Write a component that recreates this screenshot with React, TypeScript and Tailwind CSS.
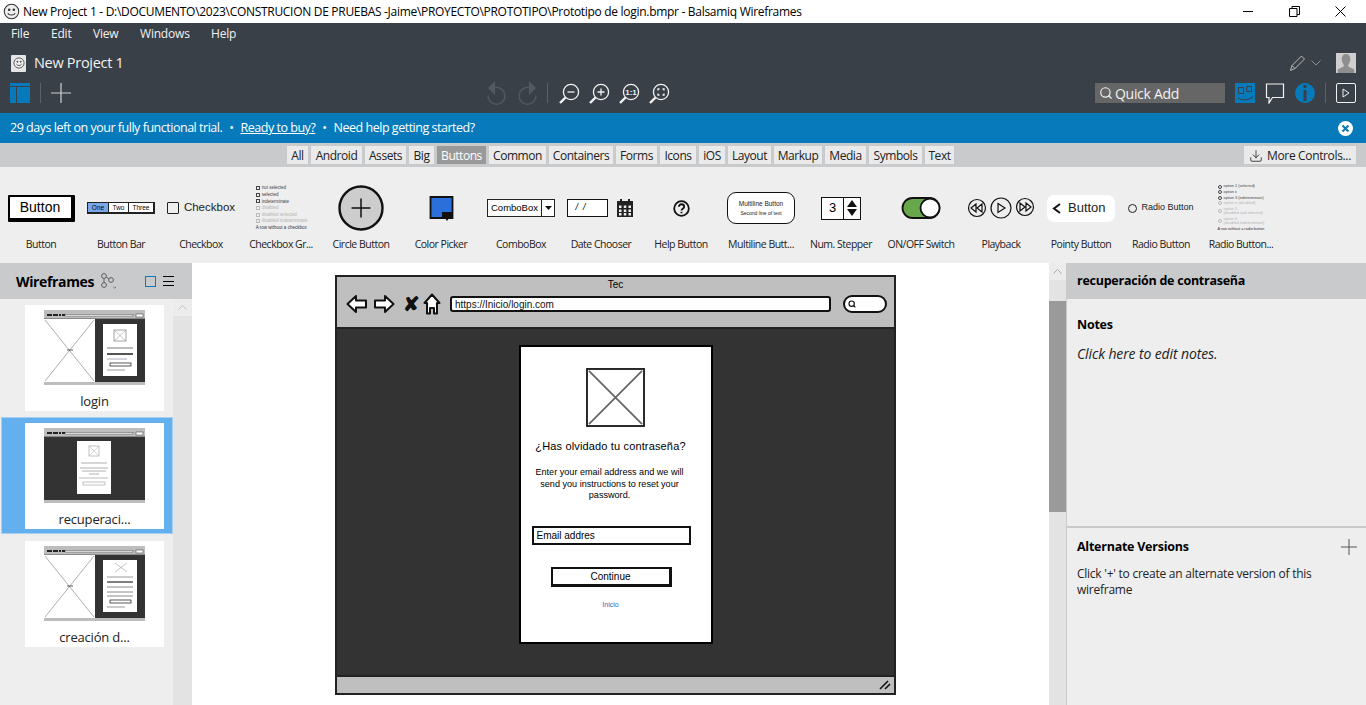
import React from 'react';
import { Search, Download } from 'lucide-react';

const SEGOE = "font-['Open_Sans',sans-serif]";
const SKETCH = "font-['Liberation_Sans',sans-serif]";

const TABS = ['All', 'Android', 'Assets', 'Big', 'Buttons', 'Common', 'Containers', 'Forms', 'Icons', 'iOS', 'Layout', 'Markup', 'Media', 'Symbols', 'Text'];
const TAB_W = [21, 51, 41, 25, 49, 57, 64, 41, 36, 26, 43, 48, 41, 53, 29];

// smiley used in the title bar and the project row
const Smiley = ({ size = 16 }: { size?: number }) => (
  <svg width={size} height={size} viewBox="0 0 16 16" fill="none" stroke="#333" strokeWidth="1">
    <circle cx="8" cy="8" r="6.8" fill="#eee" />
    <circle cx="5.8" cy="6.3" r=".7" fill="#333" />
    <circle cx="10.2" cy="6.3" r=".7" fill="#333" />
    <path d="M4.5 9.5c1 2.4 6 2.4 7 0" />
  </svg>
);

const ZoomIcon = ({ children }: { children: React.ReactNode }) => (
  <svg width="22" height="22" viewBox="0 0 22 22" fill="none" stroke="#f2f2f2" strokeWidth="1.3">
    <circle cx="13" cy="9" r="7.6" />
    <path d="M7.5 14.5 2 20" strokeWidth="2.4" />
    {children}
  </svg>
);

const Undo = ({ flip }: { flip?: boolean }) => (
  <svg width="21" height="26" viewBox="0 0 21 26" fill="none" className={flip ? '-scale-x-100' : ''}>
    <path d="M2 8 9 1v14z" fill="#555a60" />
    <path d="M9 7.5a8.5 8.5 0 1 1-7 8" stroke="#555a60" strokeWidth="1.4" />
  </svg>
);

const Divider = ({ h = 'h-[20px]' }: { h?: string }) => <div className={`w-px bg-[#5c6268] ${h}`} />;

const TitleBar = () => (
  <div className="h-[23px] bg-white flex items-center pl-[3px] shrink-0">
    <Smiley size={17} />
    <span className={`ml-[3px] text-[12px] text-black tracking-[-0.296px] whitespace-nowrap ${SEGOE}`}>
      New Project 1 - D:\DOCUMENTO\2023\CONSTRUCION DE PRUEBAS -Jaime\PROYECTO\PROTOTIPO\Prototipo de login.bmpr - Balsamiq Wireframes
    </span>
    <div className="ml-auto flex items-center">
      <div className="w-[10px] h-px bg-black mr-[36px]" />
      <svg width="11" height="11" viewBox="0 0 11 11" fill="none" stroke="#000" className="mr-[35px]">
        <path d="M.5 2.5h7.5v8H.5zM3 2.5V.5h7.5v8H8" />
      </svg>
      <svg width="11" height="11" viewBox="0 0 11 11" stroke="#000" className="mr-[20px]">
        <path d="M.5.5l10 10M10.5.5l-10 10" />
      </svg>
    </div>
  </div>
);

const MainToolbar = () => (
  <div className={`h-[90px] bg-[#3a4047] text-[#f2f2f2] shrink-0 flex flex-col ${SEGOE}`}>
    <div className="h-[21px] flex items-center pl-[11px] text-[12px] tracking-[-0.2px]">
      <span className="w-[40px]">File</span>
      <span className="w-[42px]">Edit</span>
      <span className="w-[47px]">View</span>
      <span className="w-[71px]">Windows</span>
      <span>Help</span>
    </div>
    <div className="h-[36px] flex items-center pl-[11px] pr-[10px] pt-[2px]">
      <div className="w-[15px] h-[17px] bg-[#e6e6e6] rounded-[1px] flex items-center justify-center">
        <Smiley size={12} />
      </div>
      <span className="ml-[8px] text-[14.5px] tracking-[-0.3px]">New Project 1</span>
      <svg width="18" height="18" viewBox="0 0 18 18" fill="none" stroke="#bbb" className="ml-auto">
        <path d="M1.5 16.5l1.5-5L12.5 2l3 3-9.5 9.5zM3 11.5l3 3" />
      </svg>
      <svg width="10" height="6" viewBox="0 0 10 6" fill="none" stroke="#8b9096" className="ml-[4px] mr-[15px]">
        <path d="M.5.5 5 5 9.5.5" />
      </svg>
      <div className="w-[20px] h-[20px] bg-[#cfcfcf] overflow-hidden flex justify-center">
        <svg width="20" height="20" viewBox="0 0 20 20" fill="#8e8e8e">
          <path d="M10 1c3 0 4.3 2 4.3 5 0 2.5-1 4.5-2 5.5v2l6 3V20H1.7v-3.5l6-3v-2c-1-1-2-3-2-5.5 0-3 1.3-5 4.3-5z" />
        </svg>
      </div>
    </div>
    <div className="h-[26px] flex items-center pl-[10px] pr-[10px]">
      <div className="w-[20px] h-[20px] bg-[#067abb] flex flex-col">
        <div className="h-[4px] border-b border-[#3a4047]" />
        <div className="flex-1 ml-[6px] border-l border-[#3a4047]" />
      </div>
      <div className="ml-[10px]"><Divider /></div>
      <svg width="20" height="20" viewBox="0 0 20 20" stroke="#cfd1d3" strokeWidth="1.2" className="ml-[10px]">
        <path d="M10 0v20M0 10h20" />
      </svg>
      <div className="ml-[415px] flex items-center">
        <Undo />
        <div className="w-[10px]" />
        <Undo flip />
        <div className="ml-[9px] mr-[10px]"><Divider /></div>
        <div className="flex items-center gap-[8px] mt-px">
          <ZoomIcon><path d="M9.5 9h7" /></ZoomIcon>
          <ZoomIcon><path d="M9.5 9h7M13 5.5v7" /></ZoomIcon>
          <ZoomIcon><text x="13" y="11.8" textAnchor="middle" fontSize="8" fontWeight="bold" fill="#f2f2f2" stroke="none" fontFamily="Liberation Sans">1:1</text></ZoomIcon>
          <ZoomIcon><path d="M10 7.5V6h1.5M14.5 6H16v1.500M16 10.5V12h-1.5M11.5 12H10v-1.5" /></ZoomIcon>
        </div>
      </div>
      <div className="ml-auto w-[130px] h-[20px] bg-[#666] flex items-center pl-[4px] gap-[2px]">
        <Search size={14} strokeWidth={2} color="#f2f2f2" />
        <span className="text-[14px] tracking-[-0.3px]">Quick Add</span>
      </div>
      <div className="ml-[10px] w-[20px] h-[20px] bg-[#067abb]">
        <svg width="20" height="20" viewBox="0 0 20 20" fill="none" stroke="#3a4047">
          <path d="M3.5 4.5h5v6h-5zM11.5 3.5h5v5h-5zM3 15c4 2.5 10 2.5 14-.5M17 13v2.5" />
        </svg>
      </div>
      <svg width="20" height="21" viewBox="0 0 20 21" fill="none" stroke="#f2f2f2" strokeWidth="1.2" className="ml-[10px]">
        <path d="M1.5 1h17v13.5H7.5L4 20v-5.500H1.5z" />
      </svg>
      <div className="ml-[10px] w-[20px] h-[20px] rounded-full bg-[#067abb] flex items-center justify-center">
        <svg width="6" height="16" viewBox="0 0 6 16" fill="#3a4047"><rect x="1.5" y="0" width="3" height="3" /><rect x="1.5" y="5" width="3" height="11" /></svg>
      </div>
      <div className="ml-[10px] mr-[10px]"><Divider /></div>
      <div className="w-[20px] h-[20px] border border-[#f2f2f2] rounded-[2px] flex items-center justify-center">
        <svg width="8" height="10" viewBox="0 0 8 10" fill="none" stroke="#f2f2f2"><path d="M1 1l6 4-6 4z" /></svg>
      </div>
    </div>
  </div>
);

const TrialBanner = () => (
  <div className={`h-[30px] bg-[#067abb] text-white flex items-center pl-[10px] pr-[13px] pt-px text-[12.5px] tracking-[-0.48px] shrink-0 ${SEGOE}`}>
    <span>29 days left on your fully functional trial.</span>
    <span className="mx-[7px]">•</span>
    <span className="underline">Ready to buy?</span>
    <span className="mx-[7px]">•</span>
    <span>Need help getting started?</span>
    <svg width="15" height="15" viewBox="0 0 15 15" className="ml-auto">
      <circle cx="7.5" cy="7.5" r="7.5" fill="#fff" />
      <path d="M4.5 4.5l6 6M10.5 4.5l-6 6" stroke="#067abb" strokeWidth="2" />
    </svg>
  </div>
);

const TabBar = () => (
  <div className={`h-[24px] bg-[#c9cacc] flex items-center pl-[287px] pr-[10px] shrink-0 ${SEGOE}`}>
    <div className="flex gap-[3px]">
      {TABS.map((t, i) => (
        <div
          key={t}
          style={{ width: TAB_W[i] }}
          className={`h-[18px] pt-px flex items-center justify-center text-[12px] tracking-[-0.45px] ${t === 'Buttons' ? 'bg-[#999] text-white' : 'bg-[#eaeaea] text-[#222]'}`}
        >
          {t}
        </div>
      ))}
    </div>
    <div className="ml-auto w-[112px] h-[18px] pt-px bg-[#eaeaea] flex items-center justify-center gap-[4px] text-[12px] tracking-[-0.35px] text-[#222]">
      <Download size={14} strokeWidth={1.4} color="#222" />
      More Controls...
    </div>
  </div>
);

const CheckList = () => (
  <div className={`flex flex-col gap-[1px] text-[4.5px] leading-[5.6px] whitespace-nowrap ${SKETCH}`}>
    {[['not selected', false], ['selected', false], ['indeterminate', false], ['disabled', true], ['disabled selected', true], ['disabled indeterminate', true]].map(([r, dim]) => (
      <div key={r as string} className={`flex items-center gap-[2px] ${dim ? 'text-[#b5b5b5]' : 'text-[#444]'}`}>
        <span className={`w-[4px] h-[4px] border ${dim ? 'border-[#bbb]' : 'border-[#444]'}`} />
        {r}
      </div>
    ))}
    <div className="text-[#333]">A row without a checkbox</div>
  </div>
);

const RadioList = () => (
  <div className={`flex flex-col gap-[1px] text-[3.8px] leading-[4.6px] whitespace-nowrap ${SKETCH}`}>
    {[['option 1 (selected)', false], ['option ii', false], ['option 3 (indeterminate)', false], ['option iv (disabled)', true], ['option 5\n(disabled and selected)', true], ['option 6\n(disabled indeterminate)', true]].map(([r, dim]) => (
      <div key={r as string} className={`flex items-center gap-[2px] whitespace-pre ${dim ? 'text-[#b5b5b5]' : 'text-[#444]'}`}>
        <span className={`w-[4px] h-[4px] rounded-full border ${dim ? 'border-[#bbb]' : 'border-[#444]'}`} />
        {r}
      </div>
    ))}
    <div className="text-[#333]">A row without a radio button</div>
  </div>
);

const PREVIEWS: { label: string; node: React.ReactNode }[] = [
  {
    label: 'Button',
    node: (
      <div className={`w-[67px] h-[27px] bg-white border-[2px] border-black border-r-[4px] border-b-[4px] rounded-[1px] flex items-center justify-center text-[14px] ${SKETCH}`}>Button</div>
    ),
  },
  {
    label: 'Button Bar',
    node: (
      <div className={`flex w-[68px] h-[12px] border border-[#222] border-r-[2px] border-b-[2px] text-[6.5px] ${SKETCH}`}>
        <span className="w-[21px] bg-[#7aa7e8] flex items-center justify-center border-r border-[#222]">One</span>
        <span className="w-[20px] bg-white flex items-center justify-center border-r border-[#222]">Two</span>
        <span className="flex-1 bg-white flex items-center justify-center">Three</span>
      </div>
    ),
  },
  {
    label: 'Checkbox',
    node: (
      <div className={`flex items-center gap-[5px] text-[11.5px] text-[#222] ${SKETCH}`}>
        <span className="w-[12px] h-[12px] border-[1.5px] border-[#222] rounded-[1px]" />
        Checkbox
      </div>
    ),
  },
  { label: 'Checkbox Gr...', node: <div className="ml-[1px]"><CheckList /></div> },
  {
    label: 'Circle Button',
    node: (
      <svg width="46" height="46" viewBox="0 0 46 46" fill="none" stroke="#111">
        <circle cx="23" cy="23" r="21.5" fill="#cdcdcd" strokeWidth="2.4" />
        <path d="M13.5 23h19M23 13.5v19" strokeWidth="1.5" />
      </svg>
    ),
  },
  {
    label: 'Color Picker',
    node: (
      <svg width="25" height="27" viewBox="0 0 25 27">
        <path d="M1.5 2h22v21H1.5z" fill="#2b6fdb" stroke="#111" strokeWidth="1.8" />
        <path d="M13 17h10v6h-3l-2 3-2-3h-3z" fill="#111" />
      </svg>
    ),
  },
  {
    label: 'ComboBox',
    node: (
      <div className={`flex w-[68px] h-[18px] bg-white border border-[#222] text-[9.5px] ${SKETCH}`}>
        <span className="flex-1 flex items-center pl-[3px]">ComboBox</span>
        <span className="w-[13px] border-l border-[#222] flex items-center justify-center">
          <svg width="7" height="4" viewBox="0 0 7 4"><path d="M0 0h7L3.5 4z" fill="#111" /></svg>
        </span>
      </div>
    ),
  },
  {
    label: 'Date Chooser',
    node: (
      <div className="flex items-center gap-[9px] -ml-[3px]">
        <div className={`w-[41px] h-[18px] bg-white border-[1.5px] border-[#111] flex items-center pl-[8px] text-[9px] italic ${SKETCH}`}>/&nbsp;&nbsp;/</div>
        <svg width="16" height="18" viewBox="0 0 16 18" fill="#222">
          <path d="M3 0h2v2h6V0h2v2h3v16H0V2h3z" />
          <path d="M2 6.5h2.5V9H2zM6.8 6.5h2.5V9H6.8zM11.5 6.5H14V9h-2.5zM2 10.5h2.5V13H2zM6.8 10.5h2.5V13H6.8zM11.5 10.5H14V13h-2.5zM2 14h2.5v2.5H2zM6.8 14h2.5v2.5H6.8zM11.5 14H14v2.5h-2.5z" fill="#eee" />
        </svg>
      </div>
    ),
  },
  {
    label: 'Help Button',
    node: (
      <svg width="17" height="17" viewBox="0 0 17 17" fill="none" stroke="#111" strokeWidth="1.8">
        <circle cx="8.5" cy="8.5" r="7.3" />
        <path d="M5.8 6.8c0-3.4 5.4-3.4 5.4 0 0 2-2.7 2-2.7 3.7" />
        <path d="M8.5 11.800v1.500" />
      </svg>
    ),
  },
  {
    label: 'Multiline Butt...',
    node: (
      <div className={`w-[68px] h-[32px] bg-white border-[1.5px] border-[#111] rounded-[9px] flex flex-col items-center justify-center gap-[3px] text-[#222] ${SKETCH}`}>
        <span className="text-[6.5px] leading-[7px]">Multiline Button</span>
        <span className="text-[5px] leading-[6px]">Second line of text</span>
      </div>
    ),
  },
  {
    label: 'Num. Stepper',
    node: (
      <div className={`flex w-[40px] h-[23px] bg-white border-[1.5px] border-[#111] text-[13px] ${SKETCH}`}>
        <span className="w-[22px] flex items-center justify-center border-r-[1.5px] border-[#111]">3</span>
        <span className="flex-1 flex items-center justify-center">
          <svg width="12" height="18" viewBox="0 0 12 18" fill="#111"><path d="M6 1l5 7H1zM1 10h10l-5 7z" /></svg>
        </span>
      </div>
    ),
  },
  {
    label: 'ON/OFF Switch',
    node: (
      <svg width="40" height="24" viewBox="0 0 40 24" stroke="#111" strokeWidth="1.8">
        <rect x="1.5" y="2" width="37" height="20" rx="10" fill="#67a84d" />
        <circle cx="29" cy="12" r="9.5" fill="#fff" />
      </svg>
    ),
  },
  {
    label: 'Playback',
    node: (
      <svg width="68" height="22" viewBox="0 0 68 22" fill="none" stroke="#111" strokeWidth="1.2">
        <circle cx="10" cy="11" r="8.5" />
        <path d="M9 7l-5 4 5 4zM15 7l-5 4 5 4z" />
        <circle cx="34" cy="11" r="10" />
        <path d="M31 6.5 38 11l-7 4.5z" />
        <circle cx="58" cy="10" r="8.5" />
        <path d="M59 6l5 4-5 4zM53 6l5 4-5 4z" />
      </svg>
    ),
  },
  {
    label: 'Pointy Button',
    node: (
      <div className={`w-[68px] h-[27px] bg-white rounded-[7px] flex items-center pl-[5px] gap-[7px] text-[13px] text-[#222] ${SKETCH}`}>
        <svg width="9" height="11" viewBox="0 0 9 11" fill="none" stroke="#111" strokeWidth="2"><path d="M8 1 2 5.5 8 10" /></svg>
        Button
      </div>
    ),
  },
  {
    label: 'Radio Button',
    node: (
      <div className={`flex items-center gap-[4px] text-[9px] text-[#222] whitespace-nowrap ${SKETCH}`}>
        <span className="w-[9px] h-[9px] rounded-full border border-[#222]" />
        Radio Button
      </div>
    ),
  },
  { label: 'Radio Button...', node: <RadioList /> },
];

const ControlStrip = () => (
  <div className="h-[96px] bg-[#eeeeee] flex pl-[1px] shrink-0">
    {PREVIEWS.map((p) => (
      <div key={p.label} className="w-[80px] flex flex-col items-center">
        <div className="h-[70px] pt-[12px] w-full flex items-center justify-center">{p.node}</div>
        <div className={`text-[10.5px] tracking-[-0.5px] text-[#222] leading-[14px] whitespace-nowrap ${SEGOE}`}>{p.label}</div>
      </div>
    ))}
  </div>
);

type ThumbKind = 'login' | 'recover' | 'create';

// miniature of a wireframe, drawn as a picture
const Thumb = ({ kind }: { kind: ThumbKind }) => (
  <svg width="101" height="75" viewBox="0 0 101 75" className="block">
    <rect width="101" height="75" fill="#333" />
    <rect width="101" height="9" fill="#bdbdbd" />
    <path d="M3 5h5M9 5h5M15 5h2M18 5h3" stroke="#222" strokeWidth="2" />
    <rect x="21" y="4.5" width="68" height="1.5" fill="#fff" stroke="#333" strokeWidth=".4" />
    <rect x="92" y="4" width="7" height="3" fill="#fff" stroke="#333" strokeWidth=".5" />
    <path d="M0 8.8h101" stroke="#444" strokeWidth=".6" />
    <rect y="72" width="101" height="3" fill="#bdbdbd" />
    {kind === 'recover' ? (
      <>
        <rect x="33" y="13" width="34" height="53" fill="#fff" />
        <rect x="45" y="18" width="10" height="10" fill="#fff" stroke="#999" strokeWidth=".6" />
        <path d="M45 18l10 10M55 18 45 28" stroke="#aaa" strokeWidth=".5" />
        <path d="M37 35h26M36 40h28M38 43h24M45 46h10" stroke="#999" strokeWidth=".8" />
        <path d="M35 50h29" stroke="#bbb" strokeWidth="1" />
        <rect x="39" y="54" width="22" height="3" fill="#fff" stroke="#888" strokeWidth=".5" />
      </>
    ) : (
      <>
        <rect y="9" width="51" height="63" fill="#fff" />
        <path d="M1 10 50 71M50 10 1 71" stroke="#777" strokeWidth=".6" />
        <path d="M23 40h6" stroke="#333" strokeWidth=".8" />
        <rect x="59" y="14" width="34" height="52" fill="#fff" />
        {kind === 'login' ? (
          <>
            <rect x="70" y="20" width="12" height="11" fill="#fff" stroke="#666" strokeWidth=".6" />
            <path d="M70 20l12 11M82 20 70 31" stroke="#888" strokeWidth=".5" />
            <path d="M63 38h26" stroke="#bbb" strokeWidth="2" />
            <path d="M63 44h26" stroke="#555" strokeWidth="2" />
            <path d="M63 49h20" stroke="#aab" strokeWidth="1" />
            <rect x="66" y="53" width="21" height="3" fill="#fff" stroke="#111" strokeWidth=".7" />
            <path d="M63 60h18" stroke="#999" strokeWidth="1" />
          </>
        ) : (
          <>
            <path d="M71 17l12 9M83 17 71 26" stroke="#888" strokeWidth=".5" />
            <path d="M63 31h26" stroke="#bbb" strokeWidth="1.5" />
            <path d="M63 36h26" stroke="#555" strokeWidth="1.5" />
            <path d="M63 41h26M63 46h26M63 50h26" stroke="#888" strokeWidth="1" />
            <rect x="66" y="54" width="21" height="3" fill="#fff" stroke="#111" strokeWidth=".7" />
            <path d="M63 61h18" stroke="#999" strokeWidth="1" />
          </>
        )}
      </>
    )}
  </svg>
);

const Page = ({ name, kind, selected }: { name: string; kind: ThumbKind; selected?: boolean }) => (
  <div className={`w-[170px] ml-[2px] flex justify-center ${selected ? 'h-[115px] bg-[#64b0ef] items-center outline-1 outline-[#a5d0f2]' : 'h-[106px]'}`}>
    <div className="w-[139px] h-[106px] ml-[15px] bg-white flex flex-col items-center pt-[5px]">
      <Thumb kind={kind} />
      <div className={`mt-[6px] text-[13px] leading-[20px] tracking-[-0.2px] text-[#222] ${SEGOE}`}>{name}</div>
    </div>
  </div>
);

const LeftPanel = () => (
  <div className="w-[192px] shrink-0 flex flex-col">
    <div className="h-[36px] bg-[#c9cacc] flex items-center pl-[16px] pr-[18px] shrink-0">
      <span className={`text-[14px] font-bold tracking-[-0.35px] text-black ${SEGOE}`}>Wireframes</span>
      <svg width="17" height="16" viewBox="0 0 17 16" fill="none" stroke="#444" strokeWidth=".8" className="ml-[6px]">
        <circle cx="4" cy="3" r="2.4" /><circle cx="11" cy="7" r="2.4" /><circle cx="4" cy="12" r="2.4" />
        <path d="M4 5.5v4M6.3 4l2.5 1.8M13.5 14l1.2 1 1.2-1" />
      </svg>
      <div className="ml-auto w-[11px] h-[11px] border-[1.5px] border-[#067abb]" />
      <div className="ml-[7px] w-[11px] flex flex-col gap-[3.5px]">
        <div className="h-px bg-black" /><div className="h-px bg-black" /><div className="h-px bg-black" />
      </div>
    </div>
    <div className="flex-1 bg-[#eeeeee] flex min-h-0">
      <div className="w-[173px] flex flex-col pt-[6px]">
        <Page name="login" kind="login" />
        <div className="h-[7px] shrink-0" />
        <Page name="recuperaci..." kind="recover" selected />
        <div className="h-[8px] shrink-0" />
        <Page name="creación d..." kind="create" />
      </div>
      <div className="w-[19px] bg-[#e3e3e3] flex flex-col">
        <div className="h-[17px] bg-[#ececec] flex items-center justify-center">
          <svg width="9" height="5" viewBox="0 0 9 5" fill="none" stroke="#c4c4c4"><path d="M.5 4.5l4-4 4 4" /></svg>
        </div>
      </div>
    </div>
  </div>
);

const SketchArrow = ({ d }: { d: string }) => (
  <svg width="22" height="20" viewBox="0 0 22 20">
    <path d={d} fill="#fff" stroke="#111" strokeWidth="2" strokeLinejoin="round" />
  </svg>
);

const BrowserMock = () => (
  <div className="absolute left-[143px] top-[12px] w-[561px] h-[420px] border-[2px] border-[#222] flex flex-col bg-[#333]">
    <div className="h-[52px] bg-[#bfbfbf] border-b-[2px] border-[#222] relative shrink-0">
      <div className={`text-center text-[10px] leading-[12px] pt-[2px] text-black ${SKETCH}`}>Tec</div>
      <div className="flex items-center pl-[9px] pr-[7px] pt-[2px]">
        <SketchArrow d="M1.5 10 10 2v4.5h10v7H10V18z" />
        <div className="w-[5px]" />
        <SketchArrow d="M20.5 10 12 2v4.5H2v7h10V18z" />
        <div className={`ml-[8px] w-[14px] text-[20px] leading-[20px] font-bold text-[#111] text-center ${SKETCH}`}>✘</div>
        <svg width="18" height="22" viewBox="0 0 18 22" className="ml-[6px]">
          <path d="M9 1.5 16.5 10H14v10.5h-3V15H7v5.5H4V10H1.5z" fill="#fff" stroke="#111" strokeWidth="2" strokeLinejoin="round" />
        </svg>
        <div className={`ml-[9px] w-[381px] h-[16px] bg-white border-[2px] border-[#111] rounded-[3px] flex items-center pl-[3px] text-[10px] text-[#111] ${SKETCH}`}>https://Inicio/login.com</div>
        <div className="ml-auto w-[44px] h-[18px] bg-white border-[2px] border-[#111] rounded-full flex items-center pl-[3px]">
          <Search size={8} strokeWidth={3.5} color="#111" />
        </div>
      </div>
    </div>
    <div className="flex-1 flex justify-center items-start pt-[16px]">
      <div className="w-[194px] h-[299px] bg-white border-[2px] border-black rounded-[1px] flex flex-col items-center pt-[21px] text-black">
        <svg width="59" height="59" viewBox="0 0 60 60" className="shrink-0">
          <rect x="1" y="1" width="58" height="58" fill="#fff" stroke="#111" strokeWidth="1.8" />
          <path d="M3 3l54 54M57 3 3 57" stroke="#666" strokeWidth="1.8" />
        </svg>
        <div className={`mt-[12px] mr-[10px] text-[11px] leading-[14px] tracking-[0.15px] whitespace-nowrap ${SKETCH}`}>¿Has olvidado tu contraseña?</div>
        <div className={`mt-[14px] mr-[12px] w-[160px] text-center text-[9.1px] leading-[11.5px] ${SKETCH}`}>
          Enter your email address and we will send you instructions to reset your password.
        </div>
        <div className={`mt-[24px] self-start ml-[11px] w-[159px] h-[19px] border-[2px] border-[#111] flex items-center pl-[3px] text-[10px] ${SKETCH}`}>Email addres</div>
        <div className={`mt-[22px] self-start ml-[30px] w-[121px] h-[20px] border-[2px] border-[#111] border-r-[3px] border-b-[3px] flex items-center justify-center text-[10px] ${SKETCH}`}>Continue</div>
        <div className={`mt-[13px] mr-[10px] text-[7px] leading-[9px] text-[#1f6fc0] ${SKETCH}`}>Inicio</div>
      </div>
    </div>
    <div className="h-[18px] bg-[#bfbfbf] border-t-[2px] border-[#222] flex items-center justify-end pr-[3px] shrink-0">
      <svg width="12" height="10" viewBox="0 0 12 10" stroke="#111" strokeWidth="1.6"><path d="M1 9 9 1M6 9l5-5" /></svg>
    </div>
  </div>
);

const Canvas = () => (
  <div className="flex-1 bg-white relative overflow-hidden">
    <BrowserMock />
  </div>
);

const CanvasScroll = () => (
  <div className="w-[18px] shrink-0 flex flex-col bg-[#e3e3e3] border-r border-[#c9cacc]">
    <div className="h-[17px] bg-[#ececec] flex items-center justify-center">
      <svg width="9" height="5" viewBox="0 0 9 5" fill="none" stroke="#aaa"><path d="M.5 4.5l4-4 4 4" /></svg>
    </div>
    <div className="mt-[21px] h-[211px] bg-[#9a9a9a]" />
  </div>
);

const RightPanel = () => (
  <div className={`w-[299px] shrink-0 flex flex-col bg-[#eeeeee] text-black ${SEGOE}`}>
    <div className="h-[36px] bg-[#c9cacc] flex items-center pl-[10px] text-[12.5px] font-bold tracking-[-0.25px] shrink-0">
      recuperación de contraseña
    </div>
    <div className="h-[229px] pl-[10px] pt-[17px] border-b-[2px] border-[#c9cacc] shrink-0">
      <div className="text-[12.5px] leading-[18px] font-bold tracking-[-0.25px]">Notes</div>
      <div className="mt-[11px] text-[14px] leading-[18px] italic tracking-[-0.12px] text-[#222]">Click here to edit notes.</div>
    </div>
    <div className="pl-[10px] pr-[9px] pt-[10px]">
      <div className="flex items-center justify-between h-[18px]">
        <span className="text-[12.5px] font-bold tracking-[-0.25px]">Alternate Versions</span>
        <svg width="16" height="16" viewBox="0 0 16 16" stroke="#555"><path d="M8 0v16M0 8h16" /></svg>
      </div>
      <div className="mt-[10px] text-[12px] leading-[16px] tracking-[-0.25px] text-[#222]">
        Click '+' to create an alternate version of this wireframe
      </div>
    </div>
  </div>
);

export default function App() {
  return (
    <div className="w-[1366px] h-[705px] overflow-hidden flex flex-col bg-white">
      <TitleBar />
      <MainToolbar />
      <TrialBanner />
      <TabBar />
      <ControlStrip />
      <div className="flex-1 flex min-h-0">
        <LeftPanel />
        <Canvas />
        <CanvasScroll />
        <RightPanel />
      </div>
    </div>
  );
}
